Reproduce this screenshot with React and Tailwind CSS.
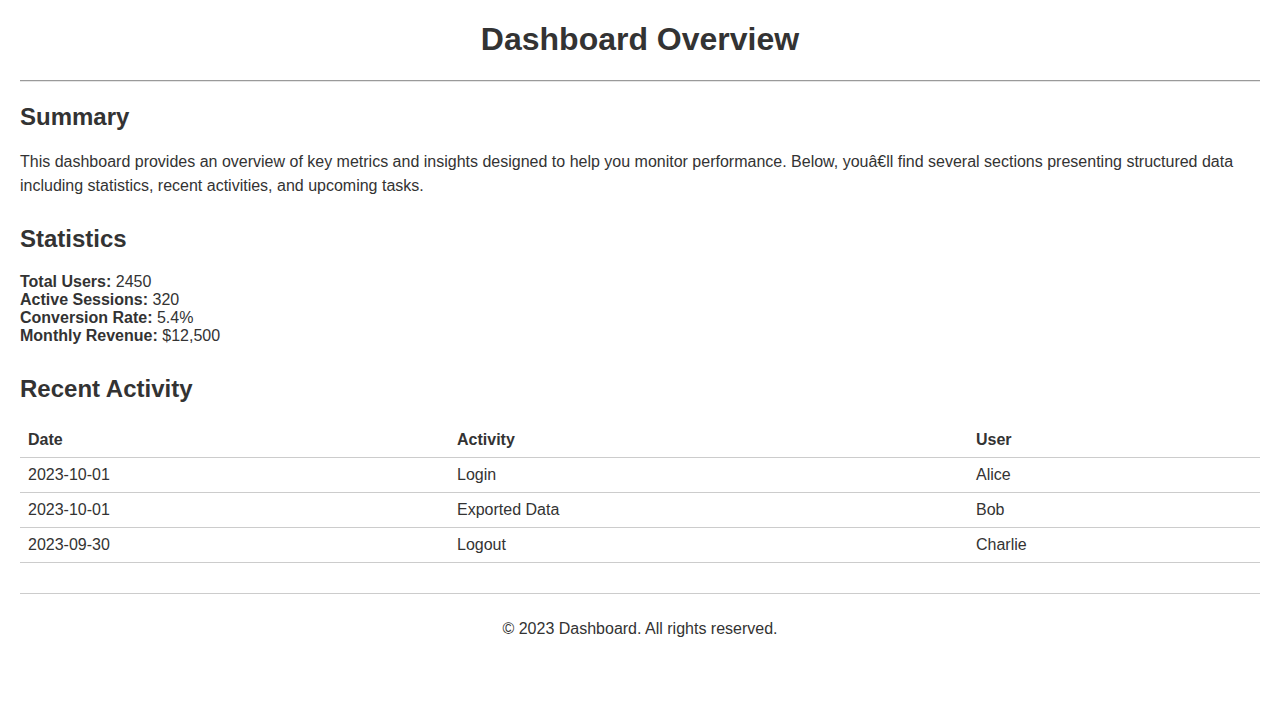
import React from "react";

const stats = [
  ["Total Users:", "2450"],
  ["Active Sessions:", "320"],
  ["Conversion Rate:", "5.4%"],
  ["Monthly Revenue:", "$12,500"],
];

const activity = [
  ["2023-10-01", "Login", "Alice"],
  ["2023-10-01", "Exported Data", "Bob"],
  ["2023-09-30", "Logout", "Charlie"],
];

export default function App() {
  return (
    <div className="min-h-screen bg-white px-5 pt-[21px] text-base text-[#333] font-['Liberation_Sans',Arial,sans-serif]">
      {/* Header */}
      <h1 className="text-center text-[32px] font-bold leading-[37px]">Dashboard Overview</h1>
      <div className="mt-[22px] border-t border-b border-t-[#9a9a9a] border-b-[#e6e6e6]" />

      {/* Summary */}
      <h2 className="mt-[21px] text-2xl font-bold leading-7">Summary</h2>
      <p className="mt-[19px] leading-6">
        This dashboard provides an overview of key metrics and insights designed to help you monitor performance. Below, youâ€ll find several sections presenting structured data including statistics, recent activities, and upcoming tasks.
      </p>

      {/* Statistics */}
      <h2 className="mt-[27px] text-2xl font-bold leading-7">Statistics</h2>
      <div className="mt-[20px] flex flex-col leading-[18px]">
        {stats.map(([label, value]) => (
          <div key={label}>
            <strong>{label}</strong> {value}
          </div>
        ))}
      </div>

      {/* Recent Activity */}
      <h2 className="mt-[30px] text-2xl font-bold leading-7">Recent Activity</h2>
      <table className="mt-[20px] w-full border-collapse text-left leading-[18px]">
        <thead>
          <tr className="border-b border-[#ccc]">
            <th className="w-[429px] px-2 py-2 font-bold">Date</th>
            <th className="w-[519px] px-2 py-2 font-bold">Activity</th>
            <th className="px-2 py-2 font-bold">User</th>
          </tr>
        </thead>
        <tbody>
          {activity.map((row, i) => (
            <tr key={i} className="border-b border-[#ccc]">
              {row.map((cell, j) => (
                <td key={j} className="px-2 py-2">{cell}</td>
              ))}
            </tr>
          ))}
        </tbody>
      </table>

      {/* Footer */}
      <footer className="mt-[30px] border-t border-[#ccc] pt-[23px] text-center leading-6">
        © 2023 Dashboard. All rights reserved.
      </footer>
    </div>
  );
}
